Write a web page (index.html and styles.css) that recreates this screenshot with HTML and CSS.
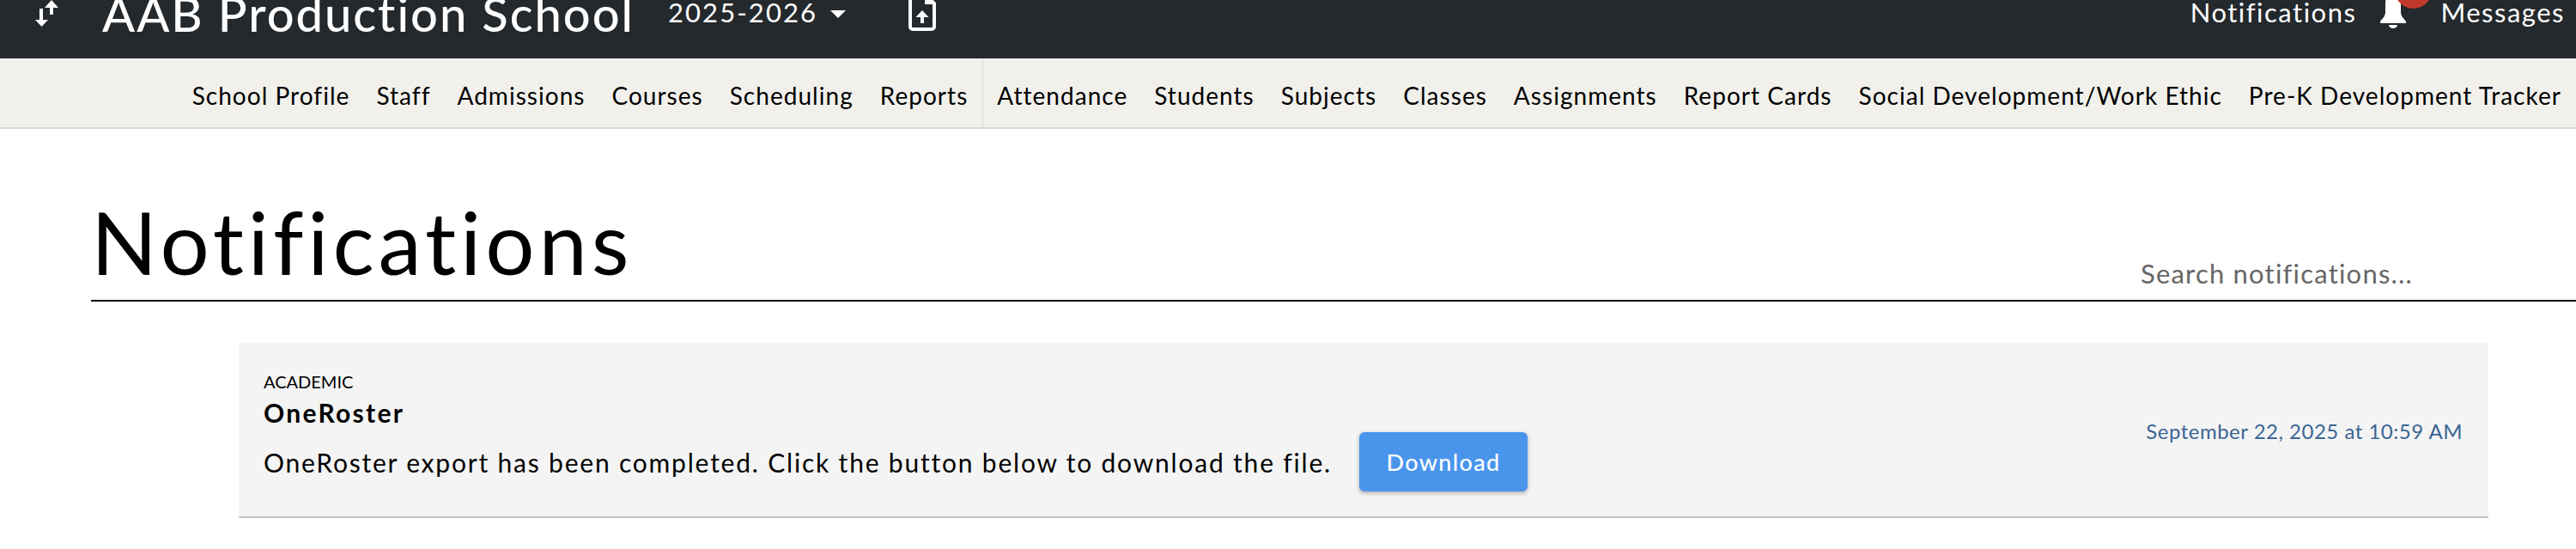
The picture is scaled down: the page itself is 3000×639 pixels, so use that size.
FILE: index.html
```html
<!DOCTYPE html>
<html lang="en">
<head>
<meta charset="UTF-8" />
<title>Notifications</title>
<link rel="stylesheet" href="styles.css">
</head>
<body>
  <header class="topbar">
    <div class="topbar-left">
      <svg class="icon-switch" width="30" height="32" viewBox="0 0 30 32" fill="#fff">
        <path d="M5 10h4v13h6l-7.500 8L0 23h5z" />
        <path d="M17 17h4V9h6l-8-9-8 9h6z" />
      </svg>
      <span class="school-name">AAB Production School</span>
      <span class="year">2025-2026<i class="caret"></i></span>
      <svg class="icon-file" width="32" height="44" viewBox="0 0 32 44">
        <path d="M2 3v36a3 3 0 0 0 3 3h22a3 3 0 0 0 3-3V12L20 2H5z" fill="none" stroke="#fff" stroke-width="4" />
        <path d="M19 0l12 13H19z" fill="#fff" />
        <path d="M14 35V28H8.500L16 20l7.500 8H18v7z" fill="#fff" />
      </svg>
    </div>
    <div class="topbar-right">
      <a class="top-link">Notifications</a>
      <span class="bell">
        <svg width="32" height="44" viewBox="0 0 32 44" fill="#fff">
          <path d="M16 0C9 1 7 6 7 12v10c0 5-3 7-6 11v2h30v-2c-3-4-6-6-6-11V12c0-6-2-11-9-12z" />
          <path d="M11 37h10a5 4 0 0 1-10 0z" />
        </svg>
        <i class="bell-badge"></i>
      </span>
      <a class="top-link">Messages</a>
    </div>
  </header>

  <nav class="subnav">
    <a>School Profile</a>
    <a>Staff</a>
    <a>Admissions</a>
    <a>Courses</a>
    <a>Scheduling</a>
    <a>Reports</a>
    <span class="subnav-divider"></span>
    <a>Attendance</a>
    <a>Students</a>
    <a>Subjects</a>
    <a>Classes</a>
    <a>Assignments</a>
    <a>Report Cards</a>
    <a>Social Development/Work Ethic</a>
    <a>Pre-K Development Tracker</a>
  </nav>

  <main class="content">
    <div class="page-head">
      <h1>Notifications</h1>
      <input class="search" type="text" placeholder="Search notifications..." />
    </div>

    <article class="notice">
      <div class="notice-body">
        <div class="notice-type">ACADEMIC</div>
        <h2>OneRoster</h2>
        <div class="notice-line">
          <p>OneRoster export has been completed. Click the button below to download the file.</p>
          <button class="download-btn" type="button">Download</button>
        </div>
      </div>
      <time class="notice-date">September 22, 2025 at 10:59 AM</time>
    </article>
  </main>
</body>
</html>
```

FILE: styles.css
```css
* {
  box-sizing: border-box;
}
html, body {
  margin: 0;
  padding: 0;
  background: #fff;
  font-family: Lato, "Noto Sans", sans-serif;
  color: #000;
}

/* Top bar */
.topbar {
  display: flex;
  align-items: center;
  justify-content: space-between;
  height: 68px;
  padding: 0 13px 40px 41px;
  background: #24292d;
  color: #fff;
}
.topbar-left, .topbar-right {
  display: flex;
  align-items: center;
}
.icon-switch {
  flex: none;
  margin-top: 4px;
}
.school-name {
  margin-left: 48px;
  font-size: 56px;
  font-weight: 500;
  white-space: nowrap;
  letter-spacing: 2px;
  padding-top: 2px;
}
.year {
  margin-left: 39px;
  font-size: 31px;
  letter-spacing: 2.100px;
  white-space: nowrap;
}
.caret {
  display: inline-block;
  margin-left: 15px;
  vertical-align: 5px;
  border-top: 9px solid #fff;
  border-left: 9px solid transparent;
  border-right: 9px solid transparent;
}
.icon-file {
  flex: none;
  margin-left: 73px;
}
.top-link {
  font-size: 31px;
  letter-spacing: 1.500px;
  white-space: nowrap;
}
.bell {
  position: relative;
  display: block;
  width: 32px;
  height: 44px;
  margin: 0 39px 0 27px;
}
.bell svg {
  display: block;
}
.bell-badge {
  position: absolute;
  left: 18px;
  top: -25px;
  width: 43px;
  height: 43px;
  border-radius: 50%;
  background: #c0392b;
}

/* Second level nav */
.subnav {
  display: flex;
  align-items: center;
  justify-content: flex-end;
  gap: 31px;
  height: 82px;
  padding: 6px 17px 0 0;
  background: #f1f0eb;
  border-bottom: 2px solid #d8d8d4;
  font-size: 28px;
  letter-spacing: 1.030px;
  white-space: nowrap;
}
.subnav-divider {
  align-self: stretch;
  width: 1px;
  margin: -6px -14.500px 0;
  background: #d8d8d4;
}

/* Page content */
.content {
  padding-left: 106px;
}
.page-head {
  display: flex;
  align-items: flex-end;
  justify-content: space-between;
  height: 201px;
  border-bottom: 2px solid #000;
}
.page-head h1 {
  margin: 0;
  font-size: 101px;
  font-weight: 400;
  line-height: 1;
  padding-bottom: 17px;
  letter-spacing: 4.900px;
}
.search {
  width: 507px;
  height: 50px;
  margin-bottom: 6px;
  padding: 0;
  border: none;
  outline: none;
  background: transparent;
  font-family: inherit;
  font-size: 31px;
  letter-spacing: 1.200px;
}
.search::placeholder {
  color: #666;
  opacity: 1;
}

/* Notification card */
.notice {
  display: flex;
  align-items: center;
  justify-content: space-between;
  width: 2620px;
  height: 204px;
  margin: 48px 0 0 172px;
  padding: 0 30px 0 29px;
  background: #f4f4f4;
  border-bottom: 2px solid #c0c5ca;
}
.notice-type {
  font-size: 20px;
  line-height: 24px;
  margin-top: 4px;
}
.notice h2 {
  margin: 7px 0 0;
  font-size: 30px;
  font-weight: 700;
  line-height: 34px;
  letter-spacing: 2.300px;
}
.notice-line {
  display: flex;
  align-items: center;
  gap: 32px;
  margin-top: 6px;
}
.notice-line p {
  margin: 0;
  font-size: 30px;
  letter-spacing: 1.800px;
  white-space: nowrap;
}
.download-btn {
  width: 196px;
  height: 69px;
  border: none;
  border-radius: 6px;
  background: #4a95ec;
  box-shadow: 0 2px 5px rgba(0,0,0,0.3);
  color: #fff;
  font-family: inherit;
  font-size: 27px;
  font-weight: 500;
  letter-spacing: 1.300px;
}
.notice-date {
  margin-top: 3px;
  font-size: 24px;
  color: #3a6595;
  letter-spacing: 0.500px;
  white-space: nowrap;
}
```
